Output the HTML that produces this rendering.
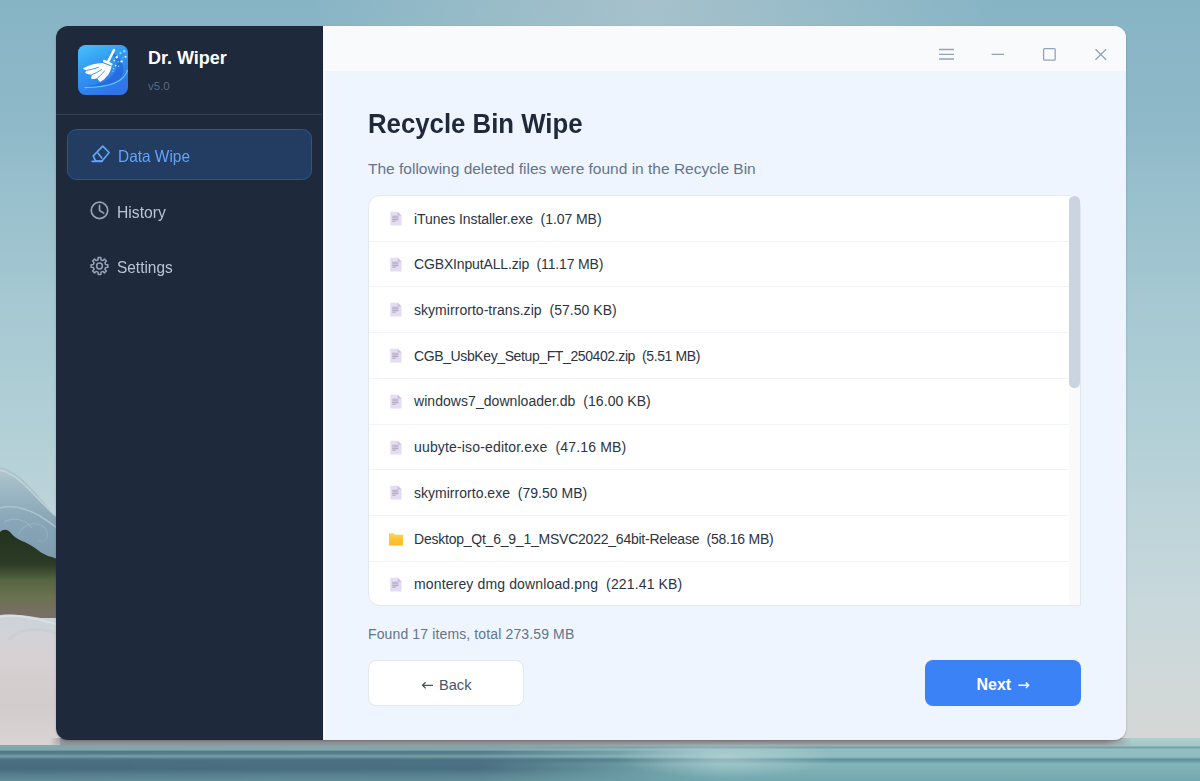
<!DOCTYPE html>
<html><head><meta charset="utf-8">
<style>
*{box-sizing:border-box;margin:0;padding:0}
html,body{width:1200px;height:781px;overflow:hidden}
body{font-family:"Liberation Sans",sans-serif;position:relative;background:#9dbfcb}
.abs{position:absolute}
#bg{position:absolute;left:0;top:0;width:1200px;height:781px}
#win{position:absolute;left:56px;top:26px;width:1070px;height:714px;border-radius:12px;overflow:hidden;box-shadow:0 1px 2px rgba(40,40,45,.3)}
#side{position:absolute;left:0;top:0;width:267px;height:714px;background:#1e293b}
#main{position:absolute;left:267px;top:0;width:803px;height:714px;background:#eff5fe}
#title{position:absolute;left:0;top:0;width:803px;height:45px;background:#f8fafc}
.t{position:absolute;white-space:pre;line-height:1}
#list{position:absolute;left:45px;top:169px;width:713px;height:410.5px;border-radius:12px 12px 0 12px;background:#fff;border:1px solid #e2e8f0;overflow:hidden}
.row{position:absolute;left:0;width:700px;height:45.71px;border-bottom:1px solid #f1f5f9}
.ico{position:absolute;top:15px;line-height:0}
.rt{position:absolute;left:45px;top:15.6px;font-size:14px;line-height:1;white-space:pre;color:#2b3444}
</style></head><body>
<svg id="bg" width="1200" height="781" viewBox="0 0 1200 781">
  <defs>
    <linearGradient id="sky" x1="0" y1="0" x2="0" y2="1">
      <stop offset="0" stop-color="#87b4c5"/>
      <stop offset="0.14" stop-color="#8db8c8"/>
      <stop offset="0.38" stop-color="#a5c8d2"/>
      <stop offset="0.56" stop-color="#b3d0d7"/>
      <stop offset="0.77" stop-color="#c8d8dc"/>
      <stop offset="0.9" stop-color="#d2d8d8"/>
      <stop offset="1" stop-color="#d8d4d3"/>
    </linearGradient>
    <radialGradient id="glow" cx="650" cy="0" r="340" gradientUnits="userSpaceOnUse">
      <stop offset="0" stop-color="#b0c5cd" stop-opacity="0.75"/>
      <stop offset="1" stop-color="#b4c8cf" stop-opacity="0"/>
    </radialGradient>
    <linearGradient id="lake" x1="0" y1="738" x2="0" y2="781" gradientUnits="userSpaceOnUse">
      <stop offset="0" stop-color="#8fb0b3"/>
      <stop offset="0.16" stop-color="#86abb0"/>
      <stop offset="0.28" stop-color="#7fa6ab"/>
      <stop offset="0.31" stop-color="#52798a"/>
      <stop offset="0.37" stop-color="#557c8b"/>
      <stop offset="0.42" stop-color="#79a2a9"/>
      <stop offset="0.47" stop-color="#5a8290"/>
      <stop offset="0.51" stop-color="#4b7082"/>
      <stop offset="0.72" stop-color="#476c7e"/>
      <stop offset="0.85" stop-color="#557e8b"/>
      <stop offset="1" stop-color="#628d98"/>
    </linearGradient>
    <linearGradient id="lake2" x1="0" y1="738" x2="0" y2="781" gradientUnits="userSpaceOnUse">
      <stop offset="0" stop-color="#b2cfcf"/>
      <stop offset="0.18" stop-color="#a3c7c8"/>
      <stop offset="0.215" stop-color="#6f9ba7"/>
      <stop offset="0.26" stop-color="#90bec1"/>
      <stop offset="0.44" stop-color="#8fbdc0"/>
      <stop offset="0.5" stop-color="#5d8f9c"/>
      <stop offset="0.56" stop-color="#6fa2aa"/>
      <stop offset="0.6" stop-color="#82b5b9"/>
      <stop offset="1" stop-color="#72a8b0"/>
    </linearGradient>
    <linearGradient id="lakeM" x1="0" y1="0" x2="1200" y2="0" gradientUnits="userSpaceOnUse">
      <stop offset="0" stop-color="#fff" stop-opacity="0"/>
      <stop offset="0.4" stop-color="#fff" stop-opacity="0.05"/>
      <stop offset="0.52" stop-color="#fff" stop-opacity="0.6"/>
      <stop offset="0.6" stop-color="#fff" stop-opacity="1"/>
      <stop offset="1" stop-color="#fff" stop-opacity="1"/>
    </linearGradient>
    <mask id="lmask"><rect x="0" y="730" width="1200" height="51" fill="url(#lakeM)"/></mask>
    <radialGradient id="lakeHi" cx="725" cy="758" r="110" gradientUnits="userSpaceOnUse" gradientTransform="translate(725 758) scale(1 0.18) translate(-725 -758)">
      <stop offset="0" stop-color="#c6dcdc" stop-opacity="0.55"/>
      <stop offset="1" stop-color="#c4dcdc" stop-opacity="0"/>
    </radialGradient>
    <linearGradient id="trees" x1="0" y1="530" x2="0" y2="616" gradientUnits="userSpaceOnUse">
      <stop offset="0" stop-color="#23321e"/>
      <stop offset="0.4" stop-color="#2c3b25"/>
      <stop offset="0.58" stop-color="#556441"/>
      <stop offset="0.78" stop-color="#6b7152"/>
      <stop offset="1" stop-color="#7a6f67"/>
    </linearGradient>
    <linearGradient id="glac" x1="0" y1="467" x2="0" y2="560" gradientUnits="userSpaceOnUse">
      <stop offset="0" stop-color="#b2c6cf"/>
      <stop offset="0.3" stop-color="#9ab5c3"/>
      <stop offset="0.6" stop-color="#87a5b6"/>
      <stop offset="1" stop-color="#7d9cae"/>
    </linearGradient>
    <linearGradient id="snow" x1="0" y1="615" x2="0" y2="745" gradientUnits="userSpaceOnUse">
      <stop offset="0" stop-color="#c9d3d9"/>
      <stop offset="0.12" stop-color="#d2d3d7"/>
      <stop offset="0.3" stop-color="#d6d1d3"/>
      <stop offset="0.7" stop-color="#d3cccd"/>
      <stop offset="1" stop-color="#d9d3d4"/>
    </linearGradient>
  </defs>
  <rect width="1200" height="781" fill="url(#sky)"/>
  <rect width="1200" height="300" fill="url(#glow)"/>
  <path d="M0 467 C8 468 16 474 24 481 C32 489 42 500 52 512 L60 520 L60 600 L0 600 Z" fill="url(#glac)"/>
  <path d="M0 470 C10 472 20 480 28 488 C36 496 44 505 56 516" fill="none" stroke="#c9d8de" stroke-width="2.2" opacity="0.7"/>
  <path d="M0 508 C12 505 26 508 40 516 C48 521 54 526 60 530" fill="none" stroke="#b9ccd5" stroke-width="1.5" opacity="0.7"/><path d="M18 535 C24 522 40 520 46 530 C50 538 44 544 38 540" fill="none" stroke="#b0c4ce" stroke-width="1.1" opacity="0.35"/><path d="M4 522 C14 516 26 520 32 528" fill="none" stroke="#b4c8d2" stroke-width="1.1" opacity="0.4"/>
  <path d="M0 532 C3 529 7 529 10 532 C13 536 17 539 22 541 C27 543 31 545 35 548 C39 551 43 554 48 556 C52 557 56 558 60 560 L60 618 L0 618 Z" fill="url(#trees)"/>
  <rect x="0" y="738" width="1200" height="43" fill="url(#lake)"/>
  <rect x="0" y="738" width="1200" height="43" fill="url(#lake2)" mask="url(#lmask)"/>
  <rect x="400" y="738" width="640" height="43" fill="url(#lakeHi)"/>
  <path d="M0 615 C20 613 40 618 60 622 L60 745 L0 745 Z" fill="url(#snow)"/><path d="M0 617 C14 614 30 617 56 624" fill="none" stroke="#dfe4e8" stroke-width="2" opacity="0.7"/><path d="M8 640 C20 628 40 626 58 634" fill="none" stroke="#c3cbd0" stroke-width="3" opacity="0.5"/>
  <defs><filter id="blur2" x="-10%" y="-100%" width="120%" height="300%"><feGaussianBlur stdDeviation="1.6"/></filter>
  <linearGradient id="shd" x1="0" y1="739" x2="0" y2="748" gradientUnits="userSpaceOnUse"><stop offset="0" stop-color="#8f8a8e" stop-opacity="1"/><stop offset="0.45" stop-color="#8f8d91" stop-opacity="0.95"/><stop offset="1" stop-color="#8f9498" stop-opacity="0"/></linearGradient></defs>
  <defs><linearGradient id="shdM" x1="50" y1="0" x2="1132" y2="0" gradientUnits="userSpaceOnUse"><stop offset="0" stop-color="#fff" stop-opacity="0"/><stop offset="0.015" stop-color="#fff" stop-opacity="1"/><stop offset="0.975" stop-color="#fff" stop-opacity="1"/><stop offset="1" stop-color="#fff" stop-opacity="0"/></linearGradient><mask id="shdMask"><rect x="0" y="730" width="1200" height="30" fill="url(#shdM)"/></mask></defs>
  <rect x="50" y="738" width="1082" height="10" fill="url(#shd)" mask="url(#shdMask)"/>
</svg>
<div id="win">
  <div id="side">
    <svg class="abs" style="left:22px;top:19px" width="50" height="50" viewBox="0 0 50 50">
  <defs>
    <linearGradient id="lg1" x1="0" y1="0" x2="0.5" y2="1">
      <stop offset="0" stop-color="#48c2fa"/>
      <stop offset="0.5" stop-color="#3097f2"/>
      <stop offset="1" stop-color="#2f74ea"/>
    </linearGradient>
    <clipPath id="lclip"><rect width="50" height="50" rx="7.5"/></clipPath>
  </defs>
  <g clip-path="url(#lclip)">
    <rect width="50" height="50" fill="url(#lg1)"/>
    <path d="M30 6.5 C40 9 46 17 45.5 26 C44.5 36 33 42 6.5 41.5 C26 39 36 33 38.5 22 C39.5 15 36 10 30 6.5Z" fill="#2461da" opacity="0.65"/>
    <path d="M49.5 25 C47 35 37 42.5 6.5 42.6" fill="none" stroke="#5ed2ff" stroke-width="1.1" opacity="0.9"/>
    <path d="M36 5 L30.4 16" stroke="#fff" stroke-width="2.5" stroke-linecap="round"/>
    <path d="M26 14.6 L34.4 18.4 Q35 19.6 34 20.8 L25 17 Q24.6 15.4 26 14.6 Z" fill="#fff"/>
    <g fill="#fff">
      <path d="M24.4 17.9 Q14 18 4.8 23.6 Q6 24.9 8.6 25.3 Q7.6 26.6 7.2 27.9 Q10 29.3 13.7 29.7 Q13.2 31.8 13.3 34 Q16.5 34.3 19.3 33.3 Q20.2 35.4 22.1 37.1 Q32 31 33.6 21.4 Z"/>
    </g>
    <g fill="none" stroke="#2f8cf0" stroke-width="0.9" stroke-linecap="round">
      <path d="M8.6 25.3 Q14 24.7 20.5 22.3"/>
      <path d="M13.7 29.7 Q18.4 28.2 23.6 24.6"/>
      <path d="M19.3 33.3 Q22.6 30.8 26.6 26"/>
    </g>
    <g fill="#e8f6ff">
      <circle cx="46.3" cy="6.2" r="1.3" fill="#7fe0ff"/>
      <circle cx="42.5" cy="8.2" r="1.1" fill="#7fe0ff"/>
      <circle cx="38.7" cy="12.2" r="1.2"/>
      <circle cx="47.5" cy="11.8" r="1"/>
      <circle cx="43.6" cy="16.4" r="1.2"/>
      <circle cx="36.2" cy="15.6" r="0.8"/>
      <circle cx="40.2" cy="16.8" r="0.7" fill="#9fe3ff"/>
      <circle cx="37.6" cy="20.6" r="0.9"/>
      <circle cx="40.6" cy="21.2" r="0.7" fill="#9fe3ff"/>
      <circle cx="35.6" cy="23.8" r="0.8" fill="#9fe3ff"/>
      <circle cx="39.8" cy="10" r="0.6" fill="#9fe3ff"/>
      <circle cx="44.8" cy="12.8" r="0.6" fill="#9fe3ff"/>
      <circle cx="35" cy="26.5" r="0.6" fill="#9fe3ff"/>
    </g>
  </g>
</svg>

    <div class="t" style="left:92px;top:22.5px;font-size:18px;font-weight:700;color:#fff">Dr. Wiper</div>
    <div class="t" style="left:92px;top:54.7px;font-size:11.5px;color:#5b6b82">v5.0</div>
    <div class="abs" style="left:0;top:88px;width:267px;height:1px;background:#334155"></div>
    <div class="abs" style="left:266px;top:0;width:1px;height:714px;background:#18233a"></div>
    <div class="abs" style="left:11px;top:103px;width:245px;height:51px;border-radius:9.5px;background:#223c62;border:1px solid #2d5690"></div>
    <svg class="abs" style="left:30px;top:114px" width="30" height="30" viewBox="0 0 30 30" fill="none" stroke="#60a5fa" stroke-width="1.7" stroke-linejoin="round" stroke-linecap="round"><path d="M9.6 21.2 L7.3 15.8 L16.7 6.2 L23.1 12.5 L15.9 21.2 Z"/><path d="M6.2 21.3 H16"/><path d="M11.9 13.1 L15.8 18.1"/></svg>
    <div class="t" style="left:62px;top:121.8px;font-size:16.5px;color:#60a5fa;transform:scaleX(0.935);transform-origin:0 0">Data Wipe</div>
    <svg class="abs" style="left:30px;top:170px" width="30" height="30" viewBox="0 0 30 30" fill="none" stroke="#94a3b8" stroke-width="1.7" stroke-linecap="round" stroke-linejoin="round"><circle cx="13.5" cy="14.4" r="8.2"/><path d="M13.5 9.3 V14.5 L17.7 17.1"/></svg>
    <div class="t" style="left:61px;top:177.5px;font-size:16.5px;color:#b9c5d6;transform:scaleX(0.95);transform-origin:0 0">History</div>
    <svg class="abs" style="left:30px;top:226px" width="30" height="30" viewBox="0 0 30 30" fill="none" stroke="#94a3b8" stroke-width="1.5" stroke-linejoin="round">
  <path d="M11.98 7.89 L12.17 5.60 L14.83 5.60 L15.02 7.89 L16.74 8.60 L18.50 7.12 L20.38 9.00 L18.90 10.76 L19.61 12.48 L21.90 12.67 L21.90 15.33 L19.61 15.52 L18.90 17.24 L20.38 19.00 L18.50 20.88 L16.74 19.40 L15.02 20.11 L14.83 22.40 L12.17 22.40 L11.98 20.11 L10.26 19.40 L8.50 20.88 L6.62 19.00 L8.10 17.24 L7.39 15.52 L5.10 15.33 L5.10 12.67 L7.39 12.48 L8.10 10.76 L6.62 9.00 L8.50 7.12 L10.26 8.60 Z"/>
  <circle cx="13.5" cy="14" r="2.9"/>
</svg>
    <div class="t" style="left:61px;top:233.3px;font-size:16.5px;color:#b9c5d6;transform:scaleX(0.935);transform-origin:0 0">Settings</div>
  </div>
  <div id="main">
    <div id="title"></div>
    <div class="abs" style="left:1px;top:0;width:1px;height:714px;background:#fdfdff"></div>
    <svg class="abs" style="left:610px;top:16px" width="190" height="26" viewBox="0 0 190 26" fill="none" stroke="#94a3b8" stroke-width="1.3">
      <path d="M6 7.5h15M6 12.3h15M6 17h15"/>
      <path d="M58.6 12.4h12.4"/>
      <rect x="110.6" y="6.6" width="11.6" height="11.6" rx="1"/>
      <path d="M162.5 7.2l10.6 10.6M173.1 7.2l-10.6 10.6"/>
    </svg>
    <div class="t" style="left:45px;top:84px;font-size:28px;font-weight:700;color:#1e293b;transform:scaleX(0.92);transform-origin:0 0">Recycle Bin Wipe</div>
    <div class="t" style="left:45px;top:134.9px;font-size:15.5px;color:#64748b">The following deleted files were found in the Recycle Bin</div>
    <div id="list">
      <div class="row" style="top:0.00px"><div class="ico" style="left:20px"><svg class="ic" width="14" height="16" viewBox="0 0 14 16"><path d="M1.3 0.7h7.4l3.8 3.8v9.9h-11.2z" fill="#e4dcf2"/><path d="M8.7 0.7l3.8 3.8h-3.8z" fill="#c9bedd"/><path d="M3.2 5.2h6.2M3.2 6.9h6.2M3.2 8.6h6.2M3.2 10.3h3.6" stroke="#b5adc2" stroke-width="1.1"/></svg></div><div class="rt" style="letter-spacing:-0.06px">iTunes Installer.exe  (1.07 MB)</div></div>
<div class="row" style="top:45.71px"><div class="ico" style="left:20px"><svg class="ic" width="14" height="16" viewBox="0 0 14 16"><path d="M1.3 0.7h7.4l3.8 3.8v9.9h-11.2z" fill="#e4dcf2"/><path d="M8.7 0.7l3.8 3.8h-3.8z" fill="#c9bedd"/><path d="M3.2 5.2h6.2M3.2 6.9h6.2M3.2 8.6h6.2M3.2 10.3h3.6" stroke="#b5adc2" stroke-width="1.1"/></svg></div><div class="rt" style="letter-spacing:-0.15px">CGBXInputALL.zip  (11.17 MB)</div></div>
<div class="row" style="top:91.42px"><div class="ico" style="left:20px"><svg class="ic" width="14" height="16" viewBox="0 0 14 16"><path d="M1.3 0.7h7.4l3.8 3.8v9.9h-11.2z" fill="#e4dcf2"/><path d="M8.7 0.7l3.8 3.8h-3.8z" fill="#c9bedd"/><path d="M3.2 5.2h6.2M3.2 6.9h6.2M3.2 8.6h6.2M3.2 10.3h3.6" stroke="#b5adc2" stroke-width="1.1"/></svg></div><div class="rt" style="letter-spacing:0.04px">skymirrorto-trans.zip  (57.50 KB)</div></div>
<div class="row" style="top:137.13px"><div class="ico" style="left:20px"><svg class="ic" width="14" height="16" viewBox="0 0 14 16"><path d="M1.3 0.7h7.4l3.8 3.8v9.9h-11.2z" fill="#e4dcf2"/><path d="M8.7 0.7l3.8 3.8h-3.8z" fill="#c9bedd"/><path d="M3.2 5.2h6.2M3.2 6.9h6.2M3.2 8.6h6.2M3.2 10.3h3.6" stroke="#b5adc2" stroke-width="1.1"/></svg></div><div class="rt" style="letter-spacing:-0.39px">CGB_UsbKey_Setup_FT_250402.zip  (5.51 MB)</div></div>
<div class="row" style="top:182.84px"><div class="ico" style="left:20px"><svg class="ic" width="14" height="16" viewBox="0 0 14 16"><path d="M1.3 0.7h7.4l3.8 3.8v9.9h-11.2z" fill="#e4dcf2"/><path d="M8.7 0.7l3.8 3.8h-3.8z" fill="#c9bedd"/><path d="M3.2 5.2h6.2M3.2 6.9h6.2M3.2 8.6h6.2M3.2 10.3h3.6" stroke="#b5adc2" stroke-width="1.1"/></svg></div><div class="rt" style="letter-spacing:0.05px">windows7_downloader.db  (16.00 KB)</div></div>
<div class="row" style="top:228.55px"><div class="ico" style="left:20px"><svg class="ic" width="14" height="16" viewBox="0 0 14 16"><path d="M1.3 0.7h7.4l3.8 3.8v9.9h-11.2z" fill="#e4dcf2"/><path d="M8.7 0.7l3.8 3.8h-3.8z" fill="#c9bedd"/><path d="M3.2 5.2h6.2M3.2 6.9h6.2M3.2 8.6h6.2M3.2 10.3h3.6" stroke="#b5adc2" stroke-width="1.1"/></svg></div><div class="rt" style="letter-spacing:0.16px">uubyte-iso-editor.exe  (47.16 MB)</div></div>
<div class="row" style="top:274.26px"><div class="ico" style="left:20px"><svg class="ic" width="14" height="16" viewBox="0 0 14 16"><path d="M1.3 0.7h7.4l3.8 3.8v9.9h-11.2z" fill="#e4dcf2"/><path d="M8.7 0.7l3.8 3.8h-3.8z" fill="#c9bedd"/><path d="M3.2 5.2h6.2M3.2 6.9h6.2M3.2 8.6h6.2M3.2 10.3h3.6" stroke="#b5adc2" stroke-width="1.1"/></svg></div><div class="rt" style="letter-spacing:0.02px">skymirrorto.exe  (79.50 MB)</div></div>
<div class="row" style="top:319.97px"><div class="ico" style="left:19px"><svg class="ic" width="16" height="16" viewBox="0 0 16 16"><defs><linearGradient id="fg" x1="0" y1="0" x2="0" y2="1"><stop offset="0" stop-color="#ffd34d"/><stop offset="1" stop-color="#ffb627"/></linearGradient></defs><path d="M1 2.2h4.6l1.4 1.6h8v10.6h-14z" fill="url(#fg)"/></svg></div><div class="rt" style="letter-spacing:-0.23px">Desktop_Qt_6_9_1_MSVC2022_64bit-Release  (58.16 MB)</div></div>
<div class="row" style="top:365.68px"><div class="ico" style="left:20px"><svg class="ic" width="14" height="16" viewBox="0 0 14 16"><path d="M1.3 0.7h7.4l3.8 3.8v9.9h-11.2z" fill="#e4dcf2"/><path d="M8.7 0.7l3.8 3.8h-3.8z" fill="#c9bedd"/><path d="M3.2 5.2h6.2M3.2 6.9h6.2M3.2 8.6h6.2M3.2 10.3h3.6" stroke="#b5adc2" stroke-width="1.1"/></svg></div><div class="rt" style="letter-spacing:0.14px">monterey dmg download.png  (221.41 KB)</div></div>
<div class="row" style="top:411.39px"><div class="ico" style="left:20px"><svg class="ic" width="14" height="16" viewBox="0 0 14 16"><path d="M1.3 0.7h7.4l3.8 3.8v9.9h-11.2z" fill="#e4dcf2"/><path d="M8.7 0.7l3.8 3.8h-3.8z" fill="#c9bedd"/><path d="M3.2 5.2h6.2M3.2 6.9h6.2M3.2 8.6h6.2M3.2 10.3h3.6" stroke="#b5adc2" stroke-width="1.1"/></svg></div><div class="rt" style="letter-spacing:0.0px">node-v22.12.0-x64.msi  (30.24 MB)</div></div>
      <div class="abs" style="left:700px;top:0;width:12px;height:410px;background:#f8fafc"></div>
    </div>
    <div class="abs" style="left:746px;top:169.5px;width:11px;height:192px;border-radius:5.5px;background:#cbd5e1"></div>
    <div class="t" style="left:45px;top:601px;font-size:14px;letter-spacing:0.13px;color:#64748b">Found 17 items, total 273.59 MB</div>
    <div class="abs" style="left:45px;top:634px;width:156px;height:46px;border-radius:8px;background:#fff;border:1px solid #e2e8f0"></div>
    <svg class="abs" style="left:98px;top:653px" width="14" height="14" viewBox="0 0 14 14" fill="none" stroke="#475569" stroke-width="1.3"><path d="M1.5 6.3h10.5M4.6 3.2L1.5 6.3l3.1 3.1"/></svg>
    <div class="t" style="left:116px;top:651.8px;font-size:14.6px;color:#475569">Back</div>
    <div class="abs" style="left:602px;top:634px;width:156px;height:46px;border-radius:8px;background:#3b82f6"></div>
    <div class="t" style="left:653.5px;top:651px;font-size:16px;font-weight:700;color:#fff">Next</div>
    <svg class="abs" style="left:694px;top:653px" width="14" height="14" viewBox="0 0 14 14" fill="none" stroke="#fff" stroke-width="1.4"><path d="M1.3 6.3h10.3M8.9 3.6l2.7 2.7-2.7 2.7"/></svg>
  </div>
</div>
</body></html>
